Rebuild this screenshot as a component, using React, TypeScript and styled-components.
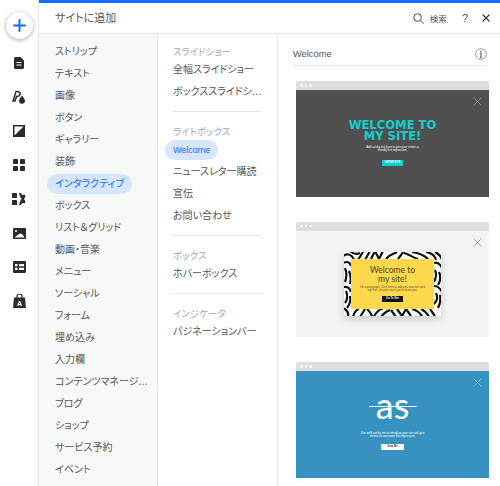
import React from 'react'
import styled, { createGlobalStyle } from 'styled-components'

const GlobalStyle = createGlobalStyle`
  html, body {
    margin: 0;
    padding: 0;
    background: #fff;
  }
  * {
    box-sizing: border-box;
  }
`

const JP = `"Liberation Sans", "Noto Sans CJK JP", sans-serif`

const Page = styled.div`
  width: 500px;
  height: 486px;
  overflow: hidden;
  display: flex;
  font-family: ${JP};
  font-feature-settings: "palt";
  color: #555;
`

const Rail = styled.nav`
  width: 39px;
  flex: none;
  display: flex;
  flex-direction: column;
  align-items: center;
  padding-top: 12px;
  border-right: 1px solid #e6e8ea;
`

const AddButton = styled.div`
  width: 27px;
  height: 27px;
  border-radius: 50%;
  background: #fff;
  box-shadow: 0 1px 4px rgba(0, 0, 0, 0.35);
  display: flex;
  align-items: center;
  justify-content: center;
  margin-bottom: 7px;
`

const RailIcon = styled.div`
  width: 16px;
  height: 34px;
  flex: none;
  display: flex;
  align-items: center;
  justify-content: center;
`

const Panel = styled.div`
  flex: 1;
  min-width: 0;
  display: flex;
  flex-direction: column;
  border-top: 3px solid #116dff;
`

const Header = styled.header`
  height: 31px;
  flex: none;
  display: flex;
  align-items: center;
  padding: 0 10px 0 16px;
  border-bottom: 1px solid #e4e6e8;
`

const Title = styled.h1`
  margin: 0;
  flex: 1;
  font-size: 11px;
  font-weight: 400;
  line-height: 30px;
`

const HeaderText = styled.span`
  font-size: 8.500px;
  margin: 0 15px 0 6px;
`

const HelpMark = styled.span`
  font-size: 11px;
  margin-right: 14px;
`

const Columns = styled.div`
  flex: 1;
  min-height: 0;
  display: flex;
`

const CategoryList = styled.ul`
  width: 119px;
  flex: none;
  list-style: none;
  margin: 0;
  padding: 7px 0 0 8px;
  display: flex;
  flex-direction: column;
  background: #f7f8f8;
  border-right: 1px solid #e6e8ea;
`

const Pill = styled.li<{ $active?: boolean }>`
  height: 20px;
  flex: none;
  line-height: 20px;
  margin: 1px 0;
  width: max-content;
  max-width: 110px;
  font-size: 10px;
  padding: 0 8px;
  border-radius: 10px;
  white-space: nowrap;
  overflow: hidden;
  text-overflow: ellipsis;
  color: ${p => (p.$active ? '#116dff' : 'inherit')};
  background: ${p => (p.$active ? '#d6e6fe' : 'transparent')};
`

const SubPill = styled(Pill)`
  max-width: 106px;
`

const Latin = styled.span`
  font-size: 9px;
`

const SubList = styled.div`
  width: 120px;
  flex: none;
  padding: 8px 15px 0;
  border-right: 1px solid #e6e8ea;
`

const Section = styled.section`
  padding-bottom: 8px;
  margin-bottom: 10px;
  border-bottom: 1px solid #e3e5e7;

  &:last-child {
    border-bottom: 0;
  }
`

const SectionLabel = styled.h2`
  margin: 0;
  height: 17px;
  line-height: 20px;
  font-size: 9.500px;
  font-weight: 400;
  color: #a5a7ad;
`

const SubItems = styled.ul`
  list-style: none;
  margin: 0 0 0 -8px;
  padding: 0;
  display: flex;
  flex-direction: column;
`

const Previews = styled.div`
  flex: 1;
  min-width: 0;
  padding: 0 13px 0 15px;
`

const PreviewTitle = styled.div`
  height: 32px;
  padding-top: 9px;
  display: flex;
  align-items: center;
  justify-content: space-between;
  border-bottom: 1px solid #e6e8ea;
  font-size: 9.300px;
  margin-bottom: 15px;
`

const Thumb = styled.article`
  position: relative;
  width: 193px;
  height: 115.500px;
  margin: 0 0 25px 3px;
  border-radius: 2px 2px 0 0;
  overflow: hidden;
  display: flex;
  flex-direction: column;
`

const ThumbBar = styled.div`
  height: 9px;
  flex: none;
  background: #dedede;
  display: flex;
  align-items: center;
  gap: 2px;
  padding-left: 4px;
`

const Dot = styled.i`
  width: 2.500px;
  height: 2.500px;
  border-radius: 50%;
  background: #f8f8f8;
`

const ThumbBody = styled.div<{ $bg: string }>`
  flex: 1;
  display: flex;
  flex-direction: column;
  align-items: center;
  justify-content: center;
  background: ${p => p.$bg};
`

const ThumbClose = styled.svg`
  position: absolute;
  top: 16px;
  right: 7px;
`

const BigTitle = styled.div`
  font-family: "DejaVu Sans", sans-serif;
  font-weight: 700;
  font-size: 11.600px;
  line-height: 11px;
  text-align: center;
  color: #0fcfcf;
`

const Tiny = styled.p<{ $color: string; $mt: number }>`
  margin: ${p => p.$mt}px 0 0;
  font-size: 2.800px;
  line-height: 3.200px;
  text-align: center;
  color: ${p => p.$color};
`

const TinyButton = styled.div<{ $bg: string; $color: string; $w: number; $mt: number }>`
  width: ${p => p.$w}px;
  height: 6px;
  margin-top: ${p => p.$mt}px;
  background: ${p => p.$bg};
  color: ${p => p.$color};
  font-weight: 700;
  font-size: 2.600px;
  line-height: 6px;
  text-align: center;
`

const ZebraCard = styled.div`
  position: relative;
  width: 97px;
  height: 64px;
  padding: 7px;
  background: #fff;
  box-shadow: 0 3px 8px rgba(0, 0, 0, 0.18);
  overflow: hidden;
  margin-top: 1px;
`

const ZebraArt = styled.svg`
  position: absolute;
  inset: 0;
`

const YellowCard = styled.div`
  position: relative;
  height: 100%;
  background: #fdd74c;
  display: flex;
  flex-direction: column;
  align-items: center;
  padding-top: 7px;
`

const YellowTitle = styled.div`
  font-family: Lato, sans-serif;
  font-weight: 400;
  font-size: 8.500px;
  line-height: 8.500px;
  text-align: center;
  color: #4d4320;
`

const LogoWrap = styled.div`
  position: relative;
  width: 48px;
  height: 30px;
  display: flex;
  justify-content: center;
  margin-top: -8px;
`

const LogoText = styled.span`
  font-family: Lato, sans-serif;
  font-weight: 400;
  font-size: 36px;
  line-height: 28px;
  color: #fff;
`

const LogoLine = styled.i`
  position: absolute;
  left: 0;
  right: 0;
  top: 15px;
  height: 1.300px;
  background: #fff;
`

const categories = [
  'ストリップ', 'テキスト', '画像', 'ボタン', 'ギャラリー', '装飾', 'インタラクティブ', 'ボックス',
  'リスト＆グリッド', '動画・音楽', 'メニュー', 'ソーシャル', 'フォーム', '埋め込み', '入力欄',
  'コンテンツマネージャー', 'ブログ', 'ショップ', 'サービス予約', 'イベント',
]

const sections = [
  { label: 'スライドショー', items: ['全幅スライドショー', 'ボックススライドショー'] },
  { label: 'ライトボックス', items: ['Welcome', 'ニュースレター購読', '宣伝', 'お問い合わせ'] },
  { label: 'ボックス', items: ['ホバーボックス'] },
  { label: 'インジケータ', items: ['パジネーションバー'] },
]

const ink = '#2b2b2b'

const railIcons = [
  <svg key="page" width="10" height="12" viewBox="0 0 10 12">
    <path d="M1.500 0h5L10 3.500v7A1.500 1.500 0 0 1 8.500 12h-7A1.500 1.500 0 0 1 0 10.500v-9A1.500 1.500 0 0 1 1.500 0z" fill={ink} />
    <path d="M2.500 5.500h5M2.500 8h5" stroke="#fff" strokeWidth="1.100" />
  </svg>,
  <svg key="paint" width="14" height="14" viewBox="0 0 14 14">
    <path d="M1 11 4 1.500h1.400C7.600 1.500 8.500 3 8 4.600 7.500 6 6 6.600 4.600 6.400L3 11z" fill="none" stroke={ink} strokeWidth="1.500" />
    <path d="M10 5.500c1.400 2 3 3.400 3 5.300a3 3 0 0 1-6 0c0-1.900 1.600-3.300 3-5.300z" fill={ink} />
  </svg>,
  <svg key="contrast" width="12" height="12" viewBox="0 0 12 12">
    <rect x=".75" y=".75" width="10.500" height="10.500" fill="#fff" stroke={ink} strokeWidth="1.500" />
    <path d="M0 12 12 0v12z" fill={ink} />
  </svg>,
  <svg key="grid" width="12" height="12" viewBox="0 0 12 12" fill={ink}>
    <rect width="5" height="5" rx=".8" />
    <rect x="7" width="5" height="5" rx=".8" />
    <rect y="7" width="5" height="5" rx=".8" />
    <rect x="7" y="7" width="5" height="5" rx=".8" />
  </svg>,
  <svg key="apps" width="14" height="12" viewBox="0 0 14 12" fill={ink}>
    <rect width="5" height="5" rx=".6" />
    <rect y="7" width="5" height="5" rx=".6" />
    <path d="M7 0h2l1 2 2.500-.5 1 2L12 6l1.500 2.500-1 2L10 10l-1 2H7l1-3.500L9.500 6 8 3.500z" />
  </svg>,
  <svg key="image" width="13" height="11" viewBox="0 0 13 11">
    <rect width="13" height="11" rx=".8" fill={ink} />
    <circle cx="3" cy="3" r="1" fill="#fff" />
    <path d="M1.500 9.500C4 8 5.500 5.500 7.500 5.500s3 2.500 4 4z" fill="#fff" />
  </svg>,
  <svg key="table" width="13" height="12" viewBox="0 0 13 12">
    <rect width="13" height="12" rx="1.200" fill={ink} />
    <path d="M2 3h2.500v2.300H2zM6 3h5v2.300H6zM2 6.800h2.500v2.300H2zM6 6.800h5v2.300H6z" fill="#fff" />
  </svg>,
  <svg key="bag" width="13" height="14" viewBox="0 0 13 14">
    <path d="M4 4V2.500a2.500 2.500 0 0 1 5 0V4" fill="none" stroke={ink} strokeWidth="1.200" />
    <path d="M1 3.500h11L13 14H0z" fill={ink} />
    <text x="6.500" y="12" fontSize="7" fontWeight="700" textAnchor="middle" fontFamily="Liberation Sans, sans-serif" fill="#fff">A</text>
  </svg>,
]

const CloseMark = ({ color }: { color: string }) => (
  <ThumbClose width="9" height="9" viewBox="0 0 9 9">
    <path d="M.5.5l8 8M8.500.5l-8 8" stroke={color} strokeWidth=".8" />
  </ThumbClose>
)

const ThumbFrame = ({ bg, close, children }: { bg: string; close: string; children: React.ReactNode }) => (
  <Thumb>
    <ThumbBar>
      <Dot />
      <Dot />
      <Dot />
    </ThumbBar>
    <ThumbBody $bg={bg}>{children}</ThumbBody>
    <CloseMark color={close} />
  </Thumb>
)

const zebra = [
  'M-1 4C3 1 7 2 10 7', 'M6 -1C9 2 12 3 16 1', 'M14 8l5-8', 'M21 8l5-9', 'M27 7l4-8 4 8 4-8',
  'M42 7C46 2 50 2 53 0', 'M54 7l6-8', 'M60 1C66 3 70 6 74 7', 'M68 0C74 1 80 3 84 7', 'M82 0C88 1 91 4 92 8',
  'M91 0C95 2 97 4 98 8', 'M-1 11C3 9 6 10 7 14', 'M1 16C3 21 3 25 1 30', 'M5 19C7 24 7 28 6 32',
  'M-1 35C4 34 6 36 7 40', 'M2 39C4 44 4 47 1 51', 'M6 44C7 48 6 52 3 56', 'M-1 56C3 58 5 61 4 65',
  'M90 11C93 10 96 12 98 16', 'M91 18C93 22 92 26 90 30', 'M95 20C97 25 96 30 94 33', 'M90 34C93 34 96 36 98 40',
  'M92 41C94 45 93 49 90 52', 'M96 43C97 48 96 52 94 56', 'M9 65C10 61 12 58 15 57', 'M16 65l5-8',
  'M23 57c3 3 5 6 5 8', 'M30 64c4-6 6-7 9-7', 'M37 65c3-4 6-6 9-7', 'M47 58l5 7', 'M53 57l5 7 4-7 5 7',
  'M68 57c4 1 8 4 10 7', 'M77 57c4 2 6 4 8 8', 'M86 57c2 3 4 5 5 8',
]

const Zebra = () => (
  <ZebraArt width="97" height="64" viewBox="0 0 97 64">
    {zebra.map(d => (
      <path key={d} d={d} fill="none" stroke="#111" strokeWidth="2.200" />
    ))}
  </ZebraArt>
)

export default function App() {
  return (
    <Page>
      <GlobalStyle />
      <Rail>
        <AddButton>
          <svg width="13" height="13" viewBox="0 0 13 13">
            <path d="M6.500 1v11M1 6.500h11" stroke="#116dff" strokeWidth="2" strokeLinecap="round" />
          </svg>
        </AddButton>
        {railIcons.map(icon => (
          <RailIcon key={icon.key}>{icon}</RailIcon>
        ))}
      </Rail>
      <Panel>
        <Header>
          <Title>サイトに追加</Title>
          <svg width="11" height="11" viewBox="0 0 12 12">
            <circle cx="5" cy="5" r="4.200" fill="none" stroke="#444" strokeWidth="1" />
            <path d="M8 8l3.500 3.500" stroke="#444" strokeWidth="1" />
          </svg>
          <HeaderText>検索</HeaderText>
          <HelpMark>?</HelpMark>
          <svg width="8" height="8" viewBox="0 0 8 8">
            <path d="M.5.5l7 7M7.500.5l-7 7" stroke="#333" strokeWidth="1.100" />
          </svg>
        </Header>
        <Columns>
          <CategoryList>
            {categories.map(name => (
              <Pill key={name} $active={name === 'インタラクティブ'}>{name}</Pill>
            ))}
          </CategoryList>
          <SubList>
            {sections.map(section => (
              <Section key={section.label}>
                <SectionLabel>{section.label}</SectionLabel>
                <SubItems>
                  {section.items.map(item => (
                    <SubPill key={item} $active={item === 'Welcome'}>
                      {item === 'Welcome' ? <Latin>{item}</Latin> : item}
                    </SubPill>
                  ))}
                </SubItems>
              </Section>
            ))}
          </SubList>
          <Previews>
            <PreviewTitle>
              Welcome
              <svg width="12" height="12" viewBox="0 0 12 12">
                <circle cx="6" cy="6" r="5.300" fill="none" stroke="#8f93a8" strokeWidth=".9" />
                <path d="M6 5v4M5 9.200h2M5 5h1" stroke="#555" strokeWidth="1" />
                <circle cx="6" cy="3.300" r=".8" fill="#555" />
              </svg>
            </PreviewTitle>
            <ThumbFrame bg="#4f4f4f" close="#9a9a9a">
              <BigTitle>WELCOME TO<br />MY SITE!</BigTitle>
              <Tiny $color="#fff" $mt={4}>Add catchy text here to give your visitors a<br />friendly first impression.</Tiny>
              <TinyButton $bg="#0fcfcf" $color="#fff" $w={21} $mt={8}>ENTER SITE</TinyButton>
            </ThumbFrame>
            <ThumbFrame bg="#f4f4f4" close="#8a8a8a">
              <ZebraCard>
                <Zebra />
                <YellowCard>
                  <YellowTitle>Welcome to<br />my site!</YellowTitle>
                  <Tiny $color="#5a4d1d" $mt={3}>I'm a paragraph. Click here to add your own text and<br />edit me. Let your users get to know you.</Tiny>
                  <TinyButton $bg="#111" $color="#fff" $w={21} $mt={3}>Go To Site</TinyButton>
                </YellowCard>
              </ZebraCard>
            </ThumbFrame>
            <ThumbFrame bg="#3892bf" close="#8fc3dd">
              <LogoWrap>
                <LogoText>as</LogoText>
                <LogoLine />
              </LogoWrap>
              <Tiny $color="#fff" $mt={11}>Use welll-catchy text to introduce your site and give<br />visitors an awesome first impression.</Tiny>
              <TinyButton $bg="#fff" $color="#333" $w={23} $mt={6}>Grab Me</TinyButton>
            </ThumbFrame>
          </Previews>
        </Columns>
      </Panel>
    </Page>
  )
}
